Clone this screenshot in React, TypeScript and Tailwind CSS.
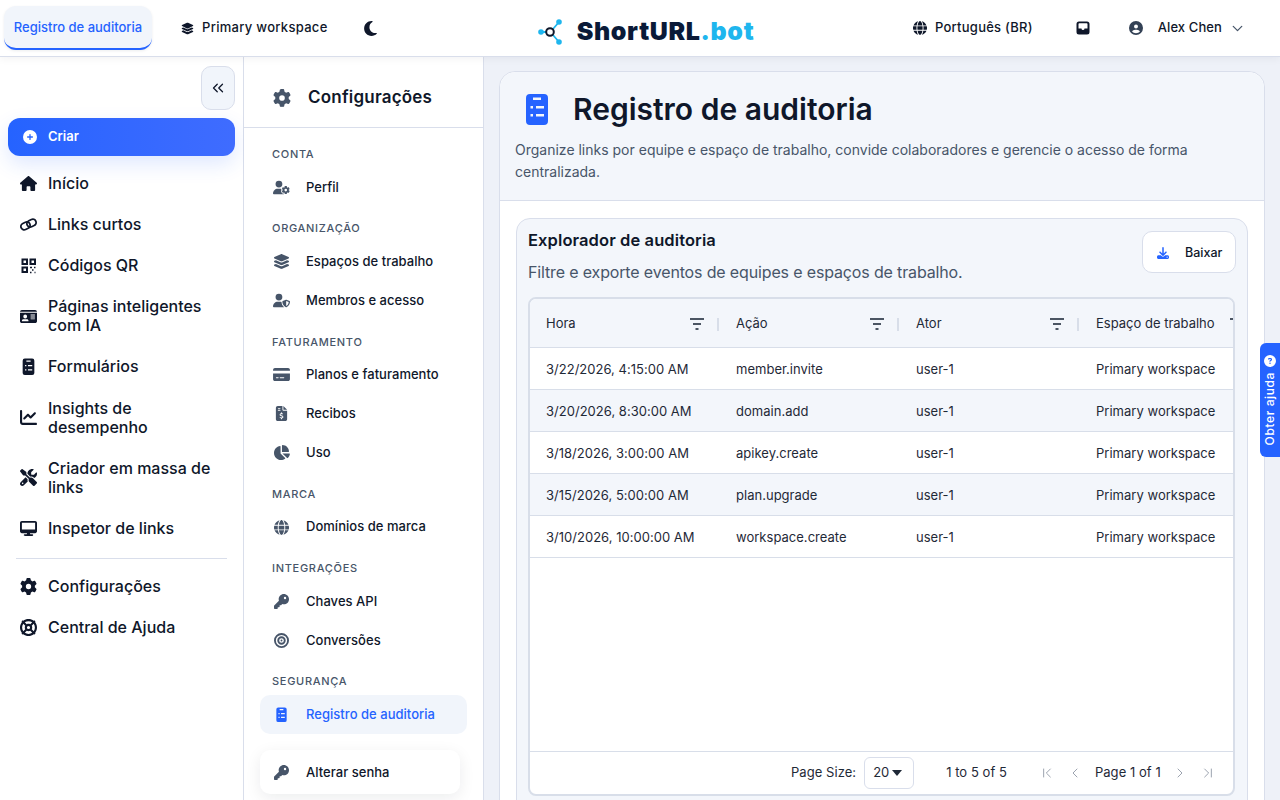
import React from 'react';
import {
  FaLayerGroup, FaMoon, FaGlobe, FaUserGear, FaCircleUser, FaHouse, FaIdCard,
  FaChartLine, FaScrewdriverWrench, FaDesktop, FaGear, FaLifeRing, FaUserShield,
  FaCreditCard, FaFileInvoiceDollar, FaChartPie, FaKey, FaBullseye, FaDownload, FaCirclePlus,
  FaCircleQuestion,
} from 'react-icons/fa6';
import { ChevronLeft, ChevronRight, ChevronFirst, ChevronLast, ChevronDown, ChevronsLeft } from 'lucide-react';

function ClipIcon({ className }: { className?: string }) {
  return (
    <svg viewBox="0 0 24 32" className={className} fill="currentColor">
      <path fillRule="evenodd" d="M5 1h14a4 4 0 0 1 4 4v23a4 4 0 0 1-4 4H5a4 4 0 0 1-4-4V5a4 4 0 0 1 4-4zM8 4.500v2.500h8V4.500zM5.500 13v2.500h2.500V13zM11 13v2.500h8V13zM5.500 21v2.500h2.500V21zM11 21v2.500h8V21z" />
    </svg>
  );
}

function InboxIcon() {
  return (
    <svg width="14" height="14" viewBox="0 0 14 14" className="ml-[43px]">
      <path fillRule="evenodd" fill="currentColor" d="M3 0.500h8a2.500 2.500 0 0 1 2.500 2.500v8a2.500 2.500 0 0 1-2.500 2.500H3a2.500 2.500 0 0 1-2.500-2.500V3a2.500 2.500 0 0 1 2.500-2.500zM2.500 3v4.500h3a1.500 1.500 0 0 0 3 0h3V3a.8.8 0 0 0-.8-.8H3.300a.8.8 0 0 0-.8.8z" />
    </svg>
  );
}

function LinkNav({ className }: { className?: string }) {
  return (
    <svg viewBox="0 0 18 18" className={className} fill="none" stroke="currentColor" strokeWidth="1.900">
      <g transform="rotate(-25 9 9)">
        <rect x="0.500" y="5.500" width="10" height="7" rx="3.500" />
        <rect x="7.500" y="5.500" width="10" height="7" rx="3.500" />
      </g>
    </svg>
  );
}

function QrNav({ className }: { className?: string }) {
  return (
    <svg viewBox="0 0 17 17" className={className} fill="none" stroke="currentColor" strokeWidth="2">
      <rect x="2.500" y="2.500" width="4.500" height="4.500" />
      <rect x="10.500" y="2.500" width="4.500" height="4.500" />
      <rect x="2.500" y="10.500" width="4.500" height="4.500" />
      <path d="M10 10.500h2M14 10.500h1.500M12 13h1.500M10 15.500h1.500M14.500 15.500h1" strokeWidth="1.300" />
    </svg>
  );
}

const mainNav = [
  { icon: FaHouse, label: 'Início' },
  { icon: LinkNav, label: 'Links curtos' },
  { icon: QrNav, label: 'Códigos QR' },
  { icon: FaIdCard, label: 'Páginas inteligentes com IA' },
  { icon: ClipIcon, label: 'Formulários' },
  { icon: FaChartLine, label: 'Insights de desempenho' },
  { icon: FaScrewdriverWrench, label: 'Criador em massa de links' },
  { icon: FaDesktop, label: 'Inspetor de links' },
];

const sections = [
  { title: 'CONTA', items: [{ icon: FaUserGear, label: 'Perfil' }] },
  {
    title: 'ORGANIZAÇÃO',
    items: [
      { icon: FaLayerGroup, label: 'Espaços de trabalho' },
      { icon: FaUserShield, label: 'Membros e acesso' },
    ],
  },
  {
    title: 'FATURAMENTO',
    items: [
      { icon: FaCreditCard, label: 'Planos e faturamento' },
      { icon: FaFileInvoiceDollar, label: 'Recibos' },
      { icon: FaChartPie, label: 'Uso' },
    ],
  },
  { title: 'MARCA', items: [{ icon: FaGlobe, label: 'Domínios de marca' }] },
  {
    title: 'INTEGRAÇÕES',
    items: [
      { icon: FaKey, label: 'Chaves API' },
      { icon: FaBullseye, label: 'Conversões' },
    ],
  },
];

const rows = [
  ['3/22/2026, 4:15:00 AM', 'member.invite'],
  ['3/20/2026, 8:30:00 AM', 'domain.add'],
  ['3/18/2026, 3:00:00 AM', 'apikey.create'],
  ['3/15/2026, 5:00:00 AM', 'plan.upgrade'],
  ['3/10/2026, 10:00:00 AM', 'workspace.create'],
];

function Logo() {
  return (
    <svg width="28" height="28" viewBox="0 0 28 28" fill="none">
      <path d="M15 12l6-7M15 18l6 7M3 15h6" stroke="#1fb6ee" strokeWidth="1.800" />
      <circle cx="12" cy="15" r="3.800" stroke="#0f172a" strokeWidth="2" />
      <circle cx="3" cy="15" r="2.800" fill="#1fb6ee" />
      <circle cx="21" cy="5" r="2.800" fill="#1fb6ee" />
      <circle cx="21" cy="25" r="2.800" fill="#1fb6ee" />
    </svg>
  );
}

function FilterIcon() {
  return (
    <svg width="14" height="12" viewBox="0 0 14 12" className="shrink-0">
      <path d="M0 1h14M3 6h8M5.500 11h3" stroke="#4b5563" strokeWidth="2" />
    </svg>
  );
}

function HeaderCell({ label, width }: { label: string; width: string }) {
  return (
    <div className={`${width} shrink-0 flex items-center h-full pl-4 pr-4 relative`}>
      <span className="flex-1 whitespace-nowrap text-[13px] text-[#1f2937]">{label}</span>
      <FilterIcon />
      <span className="absolute right-[1px] top-[18px] h-[13px] w-[2px] bg-[#d8dee9]" />
    </div>
  );
}

export default function App() {
  return (
    <div className="w-[1280px] h-[800px] overflow-hidden relative bg-white text-[#0f172a] font-['Inter',sans-serif]">
      <header className="h-[57px] flex items-center border-b border-[#d9deeb] bg-white relative shadow-[0_2px_8px_rgba(15,23,42,0.05)] z-10">
        <div className="ml-1 w-[148px] h-[44px] pt-[2px] rounded-[12px] bg-[#f1f5fb] border-b-2 border-[#2563ff] flex items-center justify-center text-[13px] font-medium text-[#2563ff] whitespace-nowrap shadow-[0_1px_3px_rgba(15,23,42,0.08)]">
          Registro de auditoria
        </div>
        <div className="ml-[29px] flex items-center gap-2 text-[13px] font-medium tracking-[0.3px] whitespace-nowrap">
          <FaLayerGroup className="text-[13px]" />
          Primary workspace
        </div>
        <FaMoon className="ml-[34px] text-[17px]" />
        <div className="ml-[159px] mt-[6px] flex items-center gap-[11px]">
          <Logo />
          <span className="text-[25px] leading-none font-black tracking-[0.65px] text-[#0a1a38]">
            ShortURL<span className="text-[#1fb6ee]">.bot</span>
          </span>
        </div>
        <div className="ml-auto flex items-center text-[13px] font-medium tracking-[0.25px] whitespace-nowrap">
          <FaGlobe className="text-[14px] mr-2" />
          Português (BR)
          <InboxIcon />
          <FaCircleUser className="ml-[39px] text-[14px] text-[#334155]" />
          <span className="ml-[15px] tracking-[0.1px]">Alex Chen</span>
          <ChevronDown className="ml-[7px] mr-[34px] text-[#475569]" size={17} strokeWidth={1.8} />
        </div>
      </header>

      <div className="flex h-[743px]">
        <aside className="w-[244px] shrink-0 border-r border-[#d9deeb] bg-white px-2 pt-[9px]">
          <div className="flex justify-end">
            <button className="w-[34px] h-[44px] rounded-[10px] bg-[#f1f5fb] border border-[#d9deeb] flex items-center justify-center">
              <ChevronsLeft size={18} strokeWidth={1.7} />
            </button>
          </div>
          <button className="mt-2 w-[227px] h-[38px] rounded-[12px] bg-gradient-to-r from-[#2563ff] to-[#3f6cff] flex items-center pl-[15px] gap-[11px] text-white text-[13px] font-semibold shadow-[0_8px_20px_rgba(37,99,255,0.15)]">
            <FaCirclePlus className="text-[14px]" />
            Criar
          </button>
          <nav className="mt-[7px]">
            {mainNav.map(item => (
              <div key={item.label} className="flex items-center pl-3 pr-2 py-[11.06px] gap-[11px] text-[16px] leading-[19px] font-medium">
                <item.icon className="text-[17px] shrink-0 w-[17px] h-[17px]" />
                <span className="w-[170px]">{item.label}</span>
              </div>
            ))}
          </nav>
          <div className="mx-2 mt-[9px] mb-[7px] border-t border-[#d9deeb]" />
          <div className="flex items-center pl-3 py-[11px] gap-[11px] text-[16px] leading-[19px] font-medium">
            <FaGear className="text-[17px] shrink-0" />
            Configurações
          </div>
          <div className="flex items-center pl-3 py-[11px] gap-[11px] text-[16px] leading-[19px] font-medium">
            <FaLifeRing className="text-[17px] shrink-0" />
            Central de Ajuda
          </div>
        </aside>

        <aside className="w-[240px] shrink-0 border-r border-[#d9deeb] bg-white">
          <div className="h-[71px] pt-[11px] border-b border-[#d9deeb] flex items-center pl-[29px] gap-[17px]">
            <FaGear className="text-[18px] text-[#475569]" />
            <span className="text-[17px] font-semibold tracking-[0.2px]">Configurações</span>
          </div>
          <div className="px-4 pt-[18px]">
            {sections.map(section => (
              <div key={section.title} className="mb-[13.48px]">
                <div className="pl-3 mb-[5.8px] h-4 leading-4 text-[11px] font-medium tracking-[0.7px] text-[#475569]">{section.title}</div>
                {section.items.map(item => (
                  <div key={item.label} className="h-[39px] flex items-center pl-[13px] gap-[16px] text-[13px] font-medium tracking-[0.03px]">
                    <item.icon className="text-[15px] w-[17px] shrink-0 text-[#475569]" />
                    {item.label}
                  </div>
                ))}
              </div>
            ))}
            <div className="pl-3 mb-[5.8px] h-4 leading-4 text-[11px] font-medium tracking-[0.7px] text-[#475569]">SEGURANÇA</div>
            <div className="h-[39px] w-[207px] rounded-[10px] bg-[#f1f5fb] flex items-center pl-[13px] gap-[16px] text-[13px] font-medium tracking-[0.03px] text-[#2563ff]">
              <ClipIcon className="h-[15px] w-[17px] shrink-0" />
              Registro de auditoria
            </div>
            <div className="mt-4 h-[44px] pt-[1px] w-[200px] rounded-[10px] bg-white flex items-center pl-[13px] gap-[16px] text-[13px] font-medium tracking-[0.03px] shadow-[0_4px_16px_rgba(15,23,42,0.08)]">
              <FaKey className="text-[15px] w-[17px] shrink-0 text-[#475569]" />
              Alterar senha
            </div>
          </div>
        </aside>

        <main className="flex-1 bg-[#eef1f8] pl-[15px] pr-[15px] pt-[14px] overflow-hidden">
          <div className="rounded-t-[16px] border border-[#d9deeb] bg-white h-[800px]">
            <div className="h-[129px] rounded-t-[16px] bg-[#f3f6fb] border-b border-[#d9deeb] px-[15px] pt-[21px]">
              <div className="flex items-center pl-2 gap-[22px]">
                <ClipIcon className="h-[32px] w-[28px] shrink-0 text-[#2563ff]" />
                <h1 className="text-[30px] leading-[32px] font-semibold">Registro de auditoria</h1>
              </div>
              <p className="mt-[14px] text-[14px] leading-[22px] text-[#475569]">
                Organize links por equipe e espaço de trabalho, convide colaboradores e gerencie o acesso de forma centralizada.
              </p>
            </div>
            <div className="mx-4 mt-[17px] rounded-[14px] border border-[#d9deeb] bg-[#f3f6fb] pl-[11px] pr-[11px] pt-[11px] h-[700px]">
              <div className="flex justify-between">
                <div>
                  <div className="text-[16.5px] leading-[20px] font-semibold tracking-[0.1px]">Explorador de auditoria</div>
                  <div className="mt-[12px] text-[16px] leading-[20px] tracking-[-0.15px] text-[#475569]">Filtre e exporte eventos de equipes e espaços de trabalho.</div>
                </div>
                <button className="mt-[1px] h-[42px] pt-[2px] w-[94px] rounded-[10px] border border-[#d9deeb] bg-white flex items-center pl-[14px] gap-[16px] text-[12.5px] font-medium">
                  <FaDownload className="text-[12px] text-[#2563ff]" />
                  Baixar
                </button>
              </div>
              <div className="mt-[15px] w-[707px] h-[499px] rounded-[8px] border-2 border-[#d8dee9] bg-white flex flex-col overflow-hidden">
                <div className="h-[49px] pt-[1px] shrink-0 bg-[#f3f6fb] border-b border-[#d8dee9] flex overflow-hidden">
                  <HeaderCell label="Hora" width="w-[190px]" />
                  <HeaderCell label="Ação" width="w-[180px]" />
                  <HeaderCell label="Ator" width="w-[180px]" />
                  <HeaderCell label="Espaço de trabalho" width="w-[180px]" />
                </div>
                <div className="flex-1">
                  {rows.map((row, i) => (
                    <div key={row[0]} className={`h-[42px] pt-[2px] flex items-center border-b border-[#d8dee9] text-[13px] tracking-[0.02px] text-[#1f2937] whitespace-nowrap ${i % 2 === 1 ? 'bg-[#f3f6fb]' : 'bg-white'}`}>
                      <span className="w-[190px] pl-4 shrink-0">{row[0]}</span>
                      <span className="w-[180px] pl-4 shrink-0">{row[1]}</span>
                      <span className="w-[180px] pl-4 shrink-0">user-1</span>
                      <span className="w-[180px] pl-4 shrink-0">Primary workspace</span>
                    </div>
                  ))}
                </div>
                <div className="h-[43px] shrink-0 border-t border-[#d8dee9] flex items-center text-[13px] tracking-[0.05px] text-[#1f2937] whitespace-nowrap">
                  <span className="ml-[261px]">Page Size:</span>
                  <div className="ml-2 w-[50px] h-[32px] rounded-[6px] border border-[#d9deeb] flex items-center pl-2 gap-[3px]">
                    20
                    <span className="w-0 h-0 border-x-[5px] border-x-transparent border-t-[6px] border-t-[#1f2937]" />
                  </div>
                  <span className="ml-8">1 to 5 of 5</span>
                  <ChevronFirst className="ml-[32px] text-[#9ca3af]" size={16} strokeWidth={1.5} />
                  <ChevronLeft className="ml-3 text-[#9ca3af]" size={16} strokeWidth={1.5} />
                  <span className="ml-3">Page 1 of 1</span>
                  <ChevronRight className="ml-[11px] text-[#9ca3af]" size={16} strokeWidth={1.5} />
                  <ChevronLast className="ml-3 text-[#9ca3af]" size={16} strokeWidth={1.5} />
                </div>
              </div>
            </div>
          </div>
        </main>
      </div>

      <div className="absolute right-0 top-[343px] w-[20px] h-[114px] rounded-l-[6px] bg-[#2563ff] flex flex-col items-center justify-center gap-[5px] text-white">
        <FaCircleQuestion className="text-[12px] shrink-0" />
        <span className="text-[12px] font-medium tracking-[0.6px] whitespace-nowrap [writing-mode:vertical-rl] rotate-180">Obter ajuda</span>
      </div>
    </div>
  );
}
